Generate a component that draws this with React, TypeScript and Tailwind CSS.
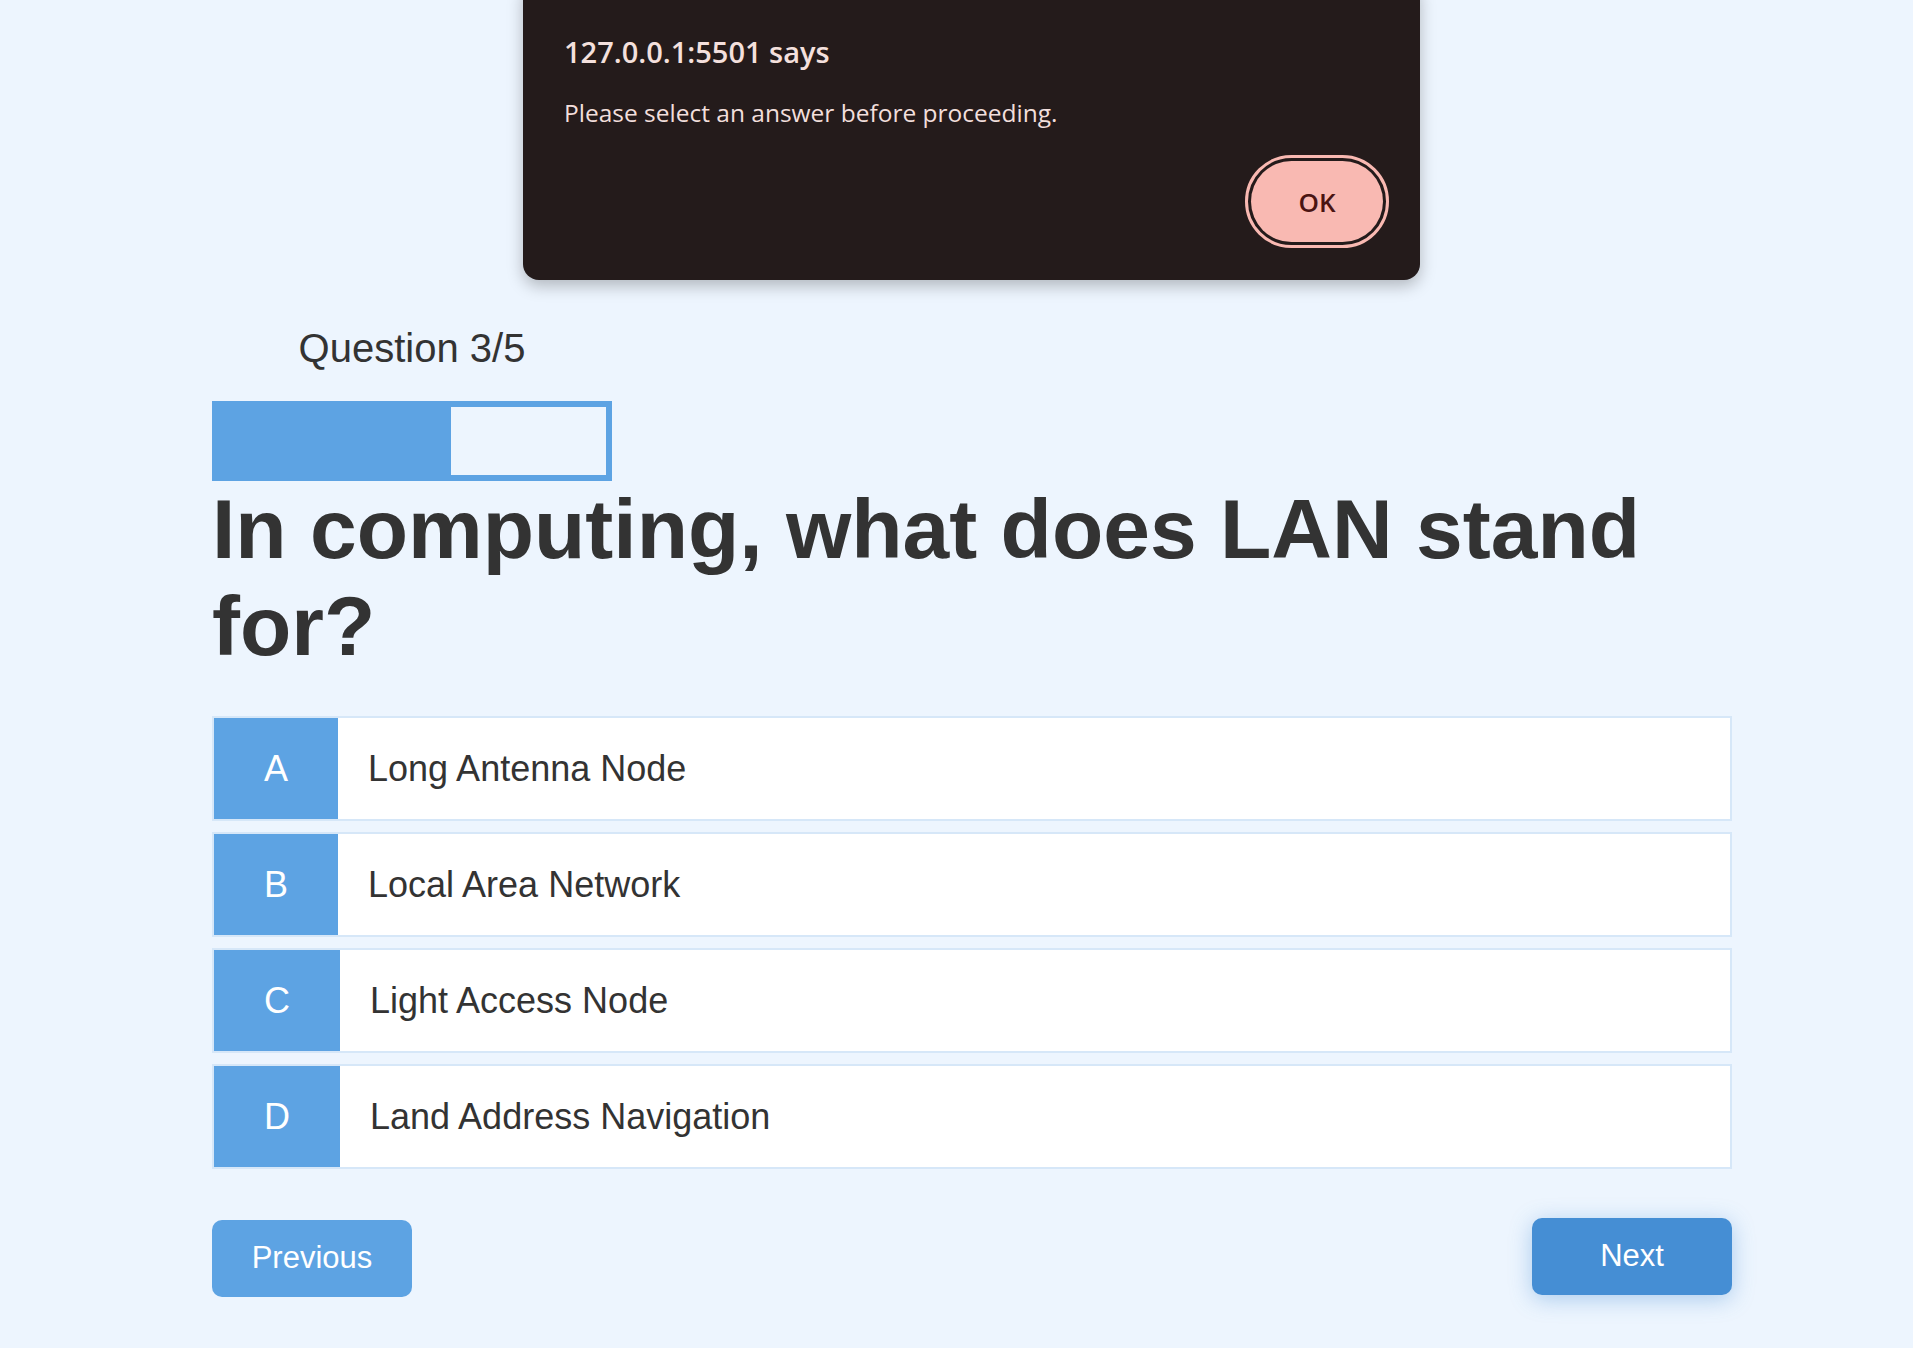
import React from 'react'

interface Option {
  letter: string
  text: string
}

const options: Option[] = [
  { letter: 'A', text: 'Long Antenna Node' },
  { letter: 'B', text: 'Local Area Network' },
  { letter: 'C', text: 'Light Access Node' },
  { letter: 'D', text: 'Land Address Navigation' },
]

// browser alert box, drawn over the page
function AlertDialog() {
  return (
    <div className="absolute left-[523px] top-[-20px] w-[897px] h-[300px] rounded-[16px] bg-[#241b1b] shadow-[0_6px_16px_rgba(0,0,0,0.25)] pt-[52px] pl-[41px] pr-[37px] font-['Open_Sans',sans-serif]">
      <div className="text-[29px] font-semibold text-[#f4e0dd] leading-[40px]">
        127.0.0.1:5501 says
      </div>
      <div className="mt-[24px] text-[24.5px] text-[#f2dfdc] leading-[33px]">
        Please select an answer before proceeding.
      </div>
      <div className="flex justify-end mt-[32px]">
        <button className="w-[132px] h-[81px] rounded-full bg-[#f9b9b2] text-[#4a1412] text-[26px] font-semibold leading-none outline-[3px] outline-solid outline-[#f9b9b2] outline-offset-[3px]">
          OK
        </button>
      </div>
    </div>
  )
}

export default function App() {
  const current = 3
  const total = 5

  return (
    <div className="relative min-h-[1348px] bg-[#edf5fe] font-['Liberation_Sans',Arial,sans-serif] text-[#333333]">
      <div className="ml-[212px] w-[1520px] pt-[325px] pb-[52px]">
        {/* progress */}
        <div className="w-[400px]">
          <div className="text-center text-[40px] leading-[46px]">
            Question {current}/{total}
          </div>
          <div className="mt-[30px] h-[80px] border-[6px] border-[#5da3e3] bg-[#edf5fe]">
            <div
              className="h-full bg-[#5da3e3]"
              style={{ width: `${(current / total) * 100}%` }}
            />
          </div>
        </div>

        <h1 className="text-[84px] font-bold leading-[97px]">
          In computing, what does LAN stand for?
        </h1>

        {/* answers */}
        <div className="mt-[41px] flex flex-col gap-[11px]">
          {options.map((o) => (
            <div
              key={o.letter}
              className="flex h-[105px] border-2 border-[#d6e7f8] bg-white"
            >
              <div className="flex items-center justify-center px-[50px] bg-[#5da3e3] text-white text-[36px]">
                {o.letter}
              </div>
              <div className="flex items-center pl-[30px] text-[36px]">
                {o.text}
              </div>
            </div>
          ))}
        </div>

        {/* nav */}
        <div className="mt-[51px] flex justify-between items-start">
          <button className="w-[200px] h-[77px] rounded-[10px] bg-[#5da3e3] text-white text-[31px]">
            Previous
          </button>
          <button className="w-[200px] h-[77px] -mt-[2px] rounded-[10px] bg-[#458ed4] text-white text-[31px] shadow-[0_4px_22px_rgba(69,142,212,0.4)]">
            Next
          </button>
        </div>
      </div>

      <AlertDialog />
    </div>
  )
}
